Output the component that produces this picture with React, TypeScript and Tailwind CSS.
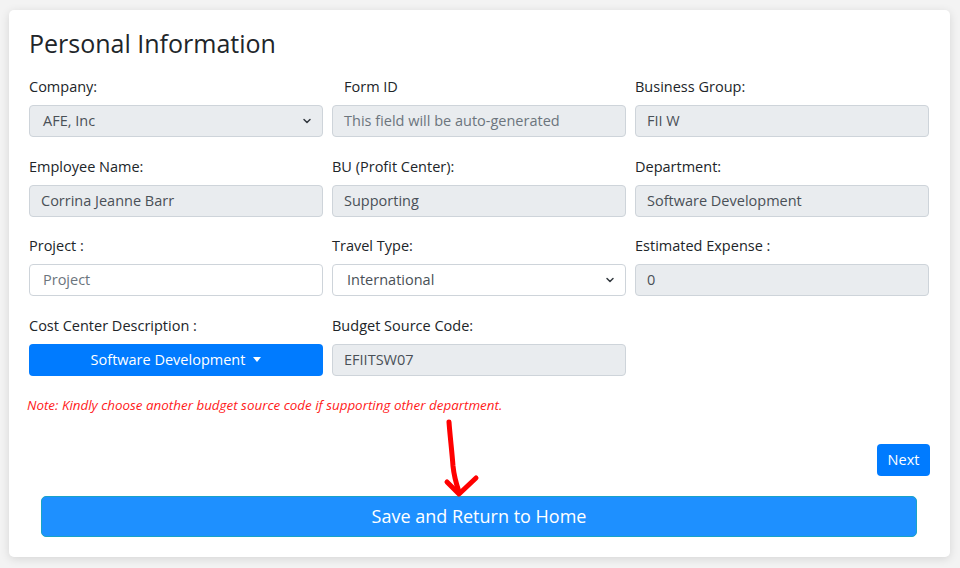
import { ChevronDown } from "lucide-react";

const font = { fontFamily: '"Open Sans", "Liberation Sans", sans-serif' };

function Label({ children }: { children: React.ReactNode }) {
  return <div className="h-[18px] text-[14.5px] leading-[18px] text-[#212529] mb-[9px] whitespace-nowrap">{children}</div>;
}

function Field({ value, placeholder, disabled = true, select = false, pl = "pl-[11px]" }: { value?: string; placeholder?: string; disabled?: boolean; select?: boolean; pl?: string }) {
  return (
    <div
      className={`h-[32px] flex items-center justify-between rounded-[4px] border border-[#ced4da] ${pl} pr-[9px] text-[14.5px] ${
        disabled ? "bg-[#e9ecef]" : "bg-white"
      }`}
    >
      <span className={value ? "text-[#495057]" : "text-[#6c757d]"}>{value ?? placeholder}</span>
      {select && <ChevronDown size={12} strokeWidth={3} className="text-[#343a40]" />}
    </div>
  );
}

export default function App() {
  return (
    <div className="min-h-[568px] bg-[#f3f3f3] pt-[10px] pl-[9px] pr-[10px]" style={font}>
      <div className="relative w-[941px] h-[547px] bg-white rounded-[5px] shadow-[0_2px_10px_rgba(0,0,0,0.12)] pl-[20px] pr-[21px] pt-[17px]">
        <h1 className="text-[25px] leading-[32px] text-[#212529] mb-[19px]">Personal Information</h1>

        <div className="grid grid-cols-[294px_294px_294px] gap-x-[9px] gap-y-[20.67px]">
          <div>
            <Label>Company:</Label>
            <Field value="AFE, Inc" select pl="pl-[13px]" />
          </div>
          <div>
            <div className="pl-[12px]">
              <Label>Form ID</Label>
            </div>
            <Field placeholder="This field will be auto-generated" />
          </div>
          <div>
            <Label>Business Group:</Label>
            <Field value="FII W" />
          </div>

          <div>
            <Label>Employee Name:</Label>
            <Field value="Corrina Jeanne Barr" />
          </div>
          <div>
            <Label>BU (Profit Center):</Label>
            <Field value="Supporting" />
          </div>
          <div>
            <Label>Department:</Label>
            <Field value="Software Development" />
          </div>

          <div>
            <Label>Project :</Label>
            <Field placeholder="Project" disabled={false} pl="pl-[13px]" />
          </div>
          <div>
            <Label>Travel Type:</Label>
            <Field value="International" disabled={false} select pl="pl-[14px]" />
          </div>
          <div>
            <Label>Estimated Expense :</Label>
            <Field value="0" />
          </div>

          <div>
            <Label>Cost Center Description :</Label>
            <div className="h-[32px] flex items-center justify-center gap-[8px] rounded-[4px] bg-[#007bff] text-white text-[14.5px]">
              Software Development
              <span className="w-0 h-0 border-l-[4px] border-r-[4px] border-t-[5px] border-l-transparent border-r-transparent border-t-white" />
            </div>
          </div>
          <div>
            <Label>Budget Source Code:</Label>
            <Field value="EFIITSW07" />
          </div>
          <div />
        </div>

        <p className="mt-[19px] text-[13.4px] leading-[20px] italic text-[#ff1a1a] -ml-[2px]">
          Note: Kindly choose another budget source code if supporting other department.
        </p>

        <div className="flex justify-end mt-[29px]">
          <button className="h-[32px] w-[53px] rounded-[4px] bg-[#007bff] text-white text-[14.5px] -mr-[1px]">Next</button>
        </div>

        <div className="mt-[20px] px-[12px]">
          <button className="w-[876px] h-[41px] rounded-[5px] bg-[#1e90ff] border border-[#1aa3c6] text-white text-[18px]">
            Save and Return to Home
          </button>
        </div>

        <svg className="absolute left-0 top-0 pointer-events-none" width="941" height="547" viewBox="9 10 941 547">
          <path
            d="M449 422 C450 436 452 452 453 466 C454 476 457 486 459 492"
            stroke="#ff0000"
            strokeWidth="5"
            fill="none"
            strokeLinecap="round"
          />
          <path
            d="M447 482 L459 494 L476 478"
            stroke="#ff0000"
            strokeWidth="5"
            fill="none"
            strokeLinecap="round"
            strokeLinejoin="round"
          />
        </svg>
      </div>
    </div>
  );
}
